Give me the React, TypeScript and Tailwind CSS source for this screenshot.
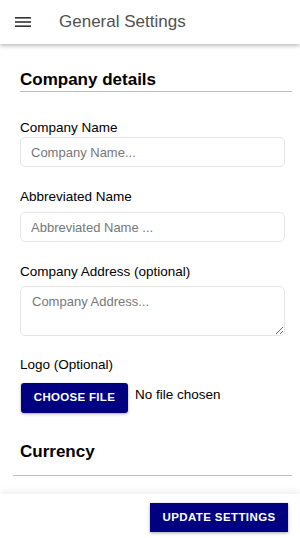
import React from "react";

export default function App() {
  return (
    <div className="relative h-[538px] w-[300px] overflow-hidden bg-white font-['Liberation_Sans',Arial,sans-serif] text-black">
      {/* top bar */}
      <div className="flex h-[44px] items-center bg-white shadow-[0_2px_4px_rgba(0,0,0,0.25)]">
        <svg className="ml-[15px]" width="16" height="12" viewBox="0 0 16 12">
          <rect x="0" y="1" width="16" height="1.6" fill="#333" />
          <rect x="0" y="5.2" width="16" height="1.6" fill="#333" />
          <rect x="0" y="9.4" width="16" height="1.6" fill="#333" />
        </svg>
        <span className="ml-[28px] text-[17px] text-[#505050]">General Settings</span>
      </div>

      <div className="pl-[20px] pr-[8px] pt-[26px]">
        <div className="border-b border-[#bdbdbd] pb-[1px] text-[17px] font-bold leading-[20px]">Company details</div>

        <div className="pr-[7px]">
          <div className="mt-[28px] text-[13.5px] leading-[16px]">Company Name</div>
          <input
            className="mt-[1px] h-[30px] w-full rounded-[5px] border border-[#e6e6ea] px-[10px] text-[13px] outline-none placeholder:text-[#777]"
            placeholder="Company Name..."
          />

          <div className="mt-[22px] text-[13.5px] leading-[16px]">Abbreviated Name</div>
          <input
            className="mt-[7px] h-[30px] w-full rounded-[5px] border border-[#e6e6ea] px-[10px] text-[13px] outline-none placeholder:text-[#777]"
            placeholder="Abbreviated Name ..."
          />

          <div className="mt-[22px] text-[13.5px] leading-[16px]">Company Address (optional)</div>
          <textarea
            className="mt-[6px] block h-[50px] w-full rounded-[5px] border border-[#e6e6ea] px-[11px] py-[5px] text-[13px] outline-none placeholder:text-[#777]"
            placeholder="Company Address..."
          />

          <div className="mt-[21px] text-[13.5px] leading-[16px]">Logo (Optional)</div>
          <div className="mt-[10px] flex items-start">
            <button className="ml-[1px] h-[30px] w-[107px] rounded-[3px] bg-[#000080] text-[11.5px] font-bold tracking-[0.3px] text-white shadow-[0_1px_3px_rgba(0,0,0,0.35)]">
              CHOOSE FILE
            </button>
            <span className="ml-[7px] mt-[2px] text-[13.5px]">No file chosen</span>
          </div>
        </div>
      </div>

      <div className="pl-[13px] pr-[8px] pt-[29px]">
        <div className="border-b border-[#bdbdbd] pb-[13px] pl-[7px] text-[17px] font-bold leading-[20px]">Currency</div>
      </div>

      {/* bottom bar */}
      <div className="absolute bottom-0 left-0 flex h-[44px] w-full items-start justify-end bg-white pr-[12px] pt-[9px] shadow-[0_-3px_6px_rgba(0,0,0,0.06)]">
        <button className="h-[29px] w-[138px] bg-[#000080] text-[11.5px] font-bold tracking-[0.4px] text-white shadow-[0_1px_3px_rgba(0,0,0,0.35)]">
          UPDATE SETTINGS
        </button>
      </div>
    </div>
  );
}
